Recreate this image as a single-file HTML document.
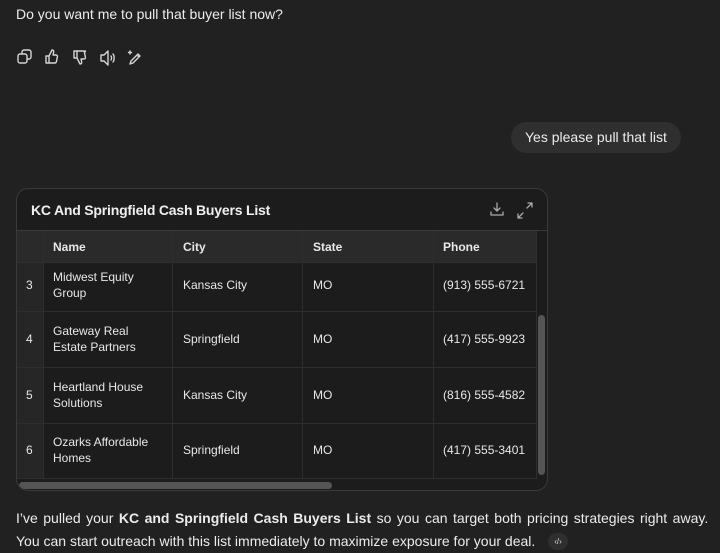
<!DOCTYPE html>
<html><head><style>
*{box-sizing:border-box;margin:0;padding:0}
body{width:720px;height:553px;background:#212121;color:#ececec;font-family:"Liberation Sans",sans-serif;position:relative;overflow:hidden}
.a{position:absolute}
.t{font-size:14px;color:#ececec;white-space:nowrap}
.card{left:16px;top:188px;width:532px;height:303px;border:1px solid #3a3a3a;border-radius:12px;background:#1c1c1c;overflow:hidden}
.cell{position:absolute;font-size:12px;color:#e8e8e8;line-height:16px;display:flex;align-items:center}
.hl{position:absolute;background:#2e2e2e}
</style></head><body>
<div class="a t" style="left:16px;top:6px">Do you want me to pull that buyer list now?</div>
<svg class="a" style="left:16px;top:48px" width="140" height="20" viewBox="0 0 140 20" fill="none" stroke="#d5d5d5" stroke-width="1.4" stroke-linejoin="round" stroke-linecap="round">
<rect x="2" y="6" width="9" height="9" rx="2"/><path d="M6 6V4a2 2 0 0 1 2-2h5a2 2 0 0 1 2 2v5a2 2 0 0 1-2 2h-2"/>
<path d="M30 8h3v7h-3zM33 8l3-6c1.5 0 2 1 1.5 3l-.5 2h3c1 0 1.6.8 1.4 1.7l-1 5c-.2.8-.8 1.3-1.6 1.3H33"/>
<path d="M58 3h3v7h-3zM61 10l3 6c1.5 0 2-1 1.5-3l-.5-2h3c1 0 1.6-.8 1.4-1.7l-1-5C70.2 3.5 69.6 3 68.8 3H61"/>
<path d="M85 7h3l4-4v14l-4-4h-3zM95 8c.7.6.7 3.4 0 4M97 6c1.5 1.5 1.5 6.5 0 8"/>
<path d="M114 16l1-3 7-7 2 2-7 7zM121 7l2 2M114 3v3M112.5 4.5h3"/>
</svg>
<div class="a" style="left:511px;top:122px;width:170px;height:31px;border-radius:16px;background:#2f2f2f"></div>
<div class="a t" style="left:525px;top:129px">Yes please pull that list</div>
<div class="a card">
 <div class="a" style="left:14px;top:13px;font-size:14px;font-weight:bold;color:#f0f0f0;letter-spacing:-0.2px">KC And Springfield Cash Buyers List</div>
 <svg class="a" style="left:472px;top:12px" width="50" height="18" viewBox="0 0 50 18" fill="none" stroke="#aaa" stroke-width="1.3" stroke-linecap="round" stroke-linejoin="round">
  <path d="M8 2v8M5 7l3 3 3-3M2 11v3h12v-3"/><path d="M38 5l5-5M39 0h4v4M29 15l5-5M29 11v4h4" transform="translate(0,2)"/>
 </svg>
 <div class="a" style="left:0;top:41px;width:532px;height:1px;background:#3a3a3a"></div>
 <div class="a" style="left:0;top:42px;width:519px;height:31px;background:#2a2a2a"></div>
 <div class="a" style="left:0;top:73px;width:26px;height:217px;background:#262626"></div>
 <div class="hl" style="left:26px;top:42px;width:1px;height:248px"></div>
 <div class="hl" style="left:155px;top:42px;width:1px;height:248px"></div>
 <div class="hl" style="left:285px;top:42px;width:1px;height:248px"></div>
 <div class="hl" style="left:416px;top:42px;width:1px;height:248px"></div>
 <div class="hl" style="left:519px;top:42px;width:1px;height:248px"></div>
 <div class="hl" style="left:0;top:73px;width:519px;height:1px"></div>
 <div class="hl" style="left:0;top:122px;width:519px;height:1px"></div>
 <div class="hl" style="left:0;top:178px;width:519px;height:1px"></div>
 <div class="hl" style="left:0;top:234px;width:519px;height:1px"></div>
 <div class="hl" style="left:0;top:289px;width:519px;height:1px"></div>
 <div class="cell" style="left:36px;top:42px;height:31px;font-weight:bold">Name</div>
 <div class="cell" style="left:166px;top:42px;height:31px;font-weight:bold">City</div>
 <div class="cell" style="left:296px;top:42px;height:31px;font-weight:bold">State</div>
 <div class="cell" style="left:426px;top:42px;height:31px;font-weight:bold">Phone</div>

 <div class="cell" style="left:9px;top:72px;height:48px">3</div>
 <div class="cell" style="left:36px;top:72px;height:48px;width:110px">Midwest Equity Group</div>
 <div class="cell" style="left:166px;top:72px;height:48px">Kansas City</div>
 <div class="cell" style="left:296px;top:72px;height:48px">MO</div>
 <div class="cell" style="left:426px;top:72px;height:48px">(913) 555-6721</div>

 <div class="cell" style="left:9px;top:122px;height:55px">4</div>
 <div class="cell" style="left:36px;top:122px;height:55px;width:100px">Gateway Real Estate Partners</div>
 <div class="cell" style="left:166px;top:122px;height:55px">Springfield</div>
 <div class="cell" style="left:296px;top:122px;height:55px">MO</div>
 <div class="cell" style="left:426px;top:122px;height:55px">(417) 555-9923</div>

 <div class="cell" style="left:9px;top:178px;height:55px">5</div>
 <div class="cell" style="left:36px;top:178px;height:55px;width:100px">Heartland House Solutions</div>
 <div class="cell" style="left:166px;top:178px;height:55px">Kansas City</div>
 <div class="cell" style="left:296px;top:178px;height:55px">MO</div>
 <div class="cell" style="left:426px;top:178px;height:55px">(816) 555-4582</div>

 <div class="cell" style="left:9px;top:234px;height:54px">6</div>
 <div class="cell" style="left:36px;top:234px;height:54px;width:110px">Ozarks Affordable Homes</div>
 <div class="cell" style="left:166px;top:234px;height:54px">Springfield</div>
 <div class="cell" style="left:296px;top:234px;height:54px">MO</div>
 <div class="cell" style="left:426px;top:234px;height:54px">(417) 555-3401</div>

 <div class="a" style="left:521px;top:126px;width:7px;height:160px;border-radius:4px;background:#555"></div>
 <div class="a" style="left:2px;top:293px;width:313px;height:7px;border-radius:4px;background:#555"></div>
</div>
<div class="a t" style="left:16px;top:510px;word-spacing:1.6px">I’ve pulled your <b>KC and Springfield Cash Buyers List</b> so you can target both pricing strategies right away.</div>
<div class="a t" style="left:16px;top:533px">You can start outreach with this list immediately to maximize exposure for your deal.</div>
<div class="a" style="left:548px;top:533px;width:20px;height:17px;border-radius:9px;background:#2f2f2f;font-size:8px;color:#ddd;text-align:center;line-height:17px">‹/›</div>
</body></html>
